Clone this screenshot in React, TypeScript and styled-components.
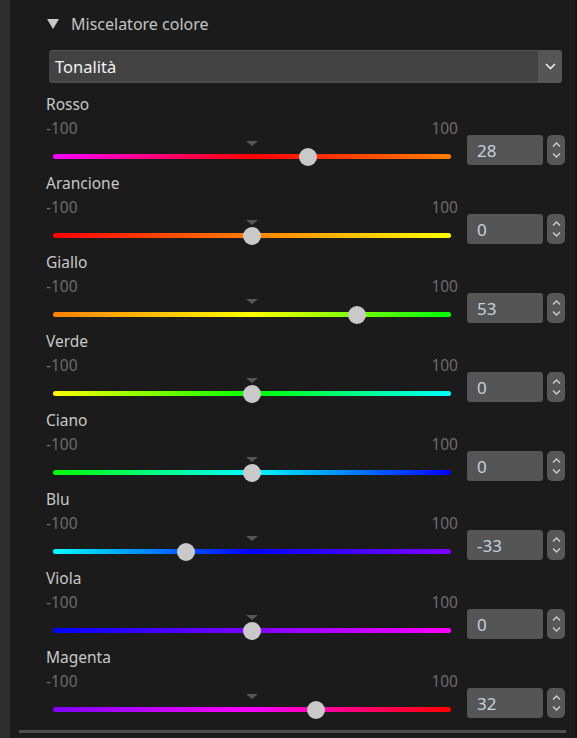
import React from "react";
import styled, { createGlobalStyle } from "styled-components";

const GlobalStyle = createGlobalStyle`
  html, body {
    margin: 0;
    padding: 0;
    background: #1b1b1b;
  }
  body {
    font-family: "Noto Sans", "Open Sans", "Liberation Sans", sans-serif;
  }
`;

const Page = styled.div`
  display: flex;
  width: 577px;
  height: 738px;
  overflow: hidden;
  background: #1b1b1b;
`;

const LeftStrip = styled.div`
  width: 10px;
  flex: none;
  background: #2e2e2e;
`;

const RightStrip = styled.div`
  width: 2px;
  flex: none;
  background: #141414;
`;

const Main = styled.div`
  flex: 1;
  display: flex;
  flex-direction: column;
  padding-top: 10px;
`;

const Header = styled.div`
  height: 28px;
  display: flex;
  align-items: center;
  gap: 12px;
  padding-left: 37px;
  color: #c4c4c4;
  font-size: 16px;
`;

const Caret = styled.span`
  width: 0;
  height: 0;
  border-left: 6px solid transparent;
  border-right: 6px solid transparent;
  border-top: 10px solid #c8c8c8;
`;

const Select = styled.div`
  margin: 12px 0 0 39px;
  width: 513px;
  height: 33px;
  display: flex;
  border-radius: 4px;
  overflow: hidden;
  background: #424242;
  box-shadow: inset 0 1px 0 #555, inset 0 -2px 0 #4c4c4c;
`;

const SelectText = styled.div`
  flex: 1;
  display: flex;
  align-items: center;
  padding-left: 6px;
  color: #f2f2f2;
  font-size: 16.5px;
`;

const SelectButton = styled.div`
  width: 24px;
  display: flex;
  align-items: center;
  justify-content: center;
  background: #555;
`;

const Rows = styled.div`
  margin-top: 11px;
  padding-left: 36px;
  display: flex;
  flex-direction: column;
`;

const Row = styled.div`
  height: 79px;
  display: flex;
  flex-direction: column;
`;

const Name = styled.div`
  height: 21px;
  line-height: 21px;
  color: #c8c8c8;
  font-size: 15.5px;
`;

const Body = styled.div`
  display: flex;
`;

const SliderCol = styled.div`
  width: 412px;
  display: flex;
  flex-direction: column;
`;

const Scale = styled.div`
  height: 25px;
  display: flex;
  justify-content: space-between;
  align-items: center;
  color: #6c6c6c;
  font-size: 15.5px;
`;

const TrackArea = styled.div`
  position: relative;
  height: 33px;
  padding: 0 7px;
  display: flex;
  align-items: center;
`;

const Track = styled.div<{ $from: number; $mid: number; $to: number }>`
  position: relative;
  flex: 1;
  height: 5px;
  border-radius: 3px;
  background: linear-gradient(
    to right,
    hsl(${(p) => p.$from}, 100%, 50%) 0%,
    hsl(${(p) => (p.$from + p.$mid) / 2}, 100%, 50%) 25%,
    hsl(${(p) => p.$mid}, 100%, 50%) 50%,
    hsl(${(p) => (p.$mid + p.$to) / 2}, 100%, 50%) 75%,
    hsl(${(p) => p.$to}, 100%, 50%) 100%
  );
`;

const Marker = styled.div`
  position: absolute;
  top: 1px;
  left: 200px;
  width: 0;
  height: 0;
  border-left: 6px solid transparent;
  border-right: 6px solid transparent;
  border-top: 5px solid #565656;
`;

const Thumb = styled.div`
  position: absolute;
  top: 50%;
  width: 18px;
  height: 18px;
  margin: -9px 0 0 -9px;
  border-radius: 50%;
  background: #c9c9c9;
`;

const Controls = styled.div`
  display: flex;
  gap: 4px;
  padding: 20px 0 0 9px;
`;

const ValueBox = styled.div`
  width: 76px;
  height: 30px;
  box-sizing: border-box;
  padding-left: 10px;
  display: flex;
  align-items: center;
  border-radius: 3px;
  background: #555;
  color: #c5d2df;
  font-size: 17px;
`;

const Spinner = styled.div`
  width: 18px;
  height: 30px;
  display: flex;
  flex-direction: column;
  align-items: center;
  justify-content: center;
  gap: 6px;
  border-radius: 5px;
  background: #575757;
`;

const Divider = styled.div`
  margin: 4px 0 0 9px;
  width: 547px;
  height: 3px;
  background: #4f4f4f;
`;

type Channel = { name: string; value: number; hues: [number, number, number] };

const channels: Channel[] = [
  { name: "Rosso", value: 28, hues: [300, 360, 390] },
  { name: "Arancione", value: 0, hues: [0, 30, 60] },
  { name: "Giallo", value: 53, hues: [30, 60, 120] },
  { name: "Verde", value: 0, hues: [60, 120, 180] },
  { name: "Ciano", value: 0, hues: [120, 180, 240] },
  { name: "Blu", value: -33, hues: [180, 240, 270] },
  { name: "Viola", value: 0, hues: [240, 270, 300] },
  { name: "Magenta", value: 32, hues: [270, 300, 360] },
];

function Chevron({ up }: { up?: boolean }) {
  return (
    <svg width="9" height="5" viewBox="0 0 9 5">
      <path
        d={up ? "M1 4.5 L4.5 1 L8 4.5" : "M1 0.5 L4.5 4 L8 0.5"}
        fill="none"
        stroke="#d0d0d0"
        strokeWidth="1.3"
      />
    </svg>
  );
}

export default function App() {
  return (
    <Page>
      <GlobalStyle />
      <LeftStrip />
      <Main>
        <Header>
          <Caret />
          Miscelatore colore
        </Header>
        <Select>
          <SelectText>Tonalità</SelectText>
          <SelectButton>
            <svg width="11" height="7" viewBox="0 0 11 7">
              <path d="M1 1 L5.5 5.5 L10 1" fill="none" stroke="#e8e8e8" strokeWidth="1.6" />
            </svg>
          </SelectButton>
        </Select>
        <Rows>
          {channels.map((c) => (
            <Row key={c.name}>
              <Name>{c.name}</Name>
              <Body>
                <SliderCol>
                  <Scale>
                    <span>-100</span>
                    <span>100</span>
                  </Scale>
                  <TrackArea>
                    <Marker />
                    <Track $from={c.hues[0]} $mid={c.hues[1]} $to={c.hues[2]}>
                      <Thumb style={{ left: `${(c.value + 100) / 2}%` }} />
                    </Track>
                  </TrackArea>
                </SliderCol>
                <Controls>
                  <ValueBox>{c.value}</ValueBox>
                  <Spinner>
                    <Chevron up />
                    <Chevron />
                  </Spinner>
                </Controls>
              </Body>
            </Row>
          ))}
        </Rows>
        <Divider />
      </Main>
      <RightStrip />
    </Page>
  );
}
